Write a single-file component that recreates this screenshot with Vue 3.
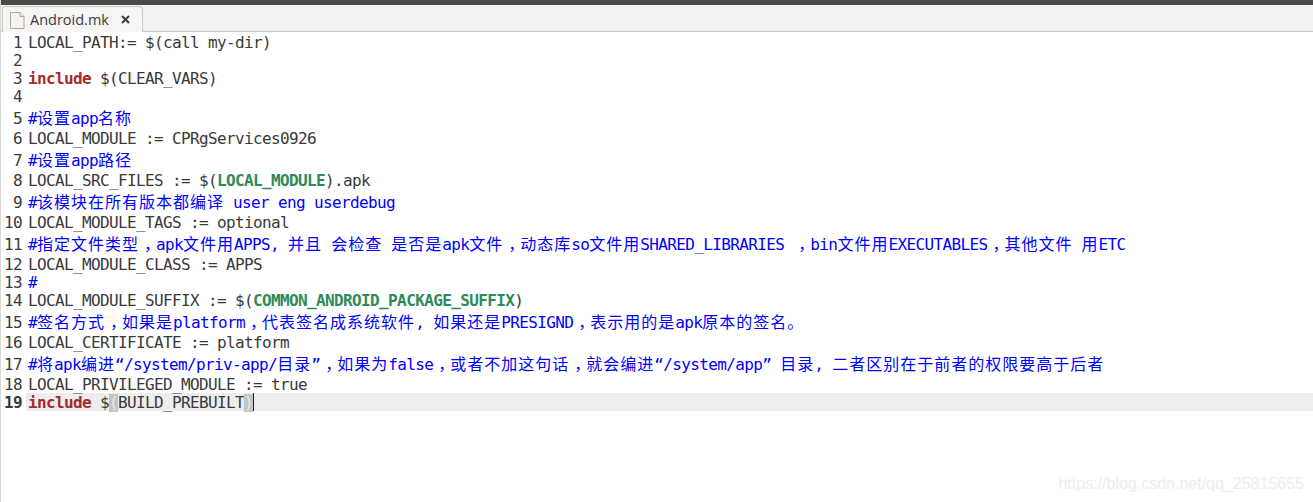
<script setup>
const K = 'k', G = 'g', C = 'c'
const lines = [
  [['LOCAL_PATH:= $(call my-dir)']],
  [],
  [['include', K], [' $(CLEAR_VARS)']],
  [],
  [['#设置app名称', C]],
  [['LOCAL_MODULE := CPRgServices0926']],
  [['#设置app路径', C]],
  [['LOCAL_SRC_FILES := $('], ['LOCAL_MODULE', G], [').apk']],
  [['#该模块在所有版本都编译 user eng userdebug', C]],
  [['LOCAL_MODULE_TAGS := optional']],
  [['#指定文件类型，apk文件用APPS, 并且 会检查 是否是apk文件，动态库so文件用SHARED_LIBRARIES ，bin文件用EXECUTABLES，其他文件 用ETC', C]],
  [['LOCAL_MODULE_CLASS := APPS']],
  [['#', C]],
  [['LOCAL_MODULE_SUFFIX := $('], ['COMMON_ANDROID_PACKAGE_SUFFIX', G], [')']],
  [['#签名方式，如果是platform，代表签名成系统软件, 如果还是PRESIGND，表示用的是apk原本的签名。', C]],
  [['LOCAL_CERTIFICATE := platform']],
  [['#将apk编进“/system/priv-app/目录”，如果为false，或者不加这句话，就会编进“/system/app” 目录, 二者区别在于前者的权限要高于后者', C]],
  [['LOCAL_PRIVILEGED_MODULE := true']],
]
const kindOf = ch => {
  if (ch === '，') return 'comma'
  if (/[\u3000-\u30ff\u4e00-\u9fff\uff00-\uffef]/.test(ch)) return 'wide'
  return ''
}
function split(text) {
  const out = []
  for (const ch of text) {
    const kind = kindOf(ch)
    const last = out[out.length - 1]
    if (last && last.kind === kind) last.text += ch
    else out.push({ text: ch, kind })
  }
  return out
}
const rows = lines.map((segs, i) => {
  const parts = segs.map(([t, cls]) => ({ cls, runs: split(t) }))
  return { n: i + 1, parts, tall: parts.some(p => p.runs.some(r => r.kind)) }
})
</script>

<template>
  <div class="window">
    <div class="topbar"></div>
    <div class="tabbar">
      <div class="tab">
        <svg class="file" width="15" height="17" viewBox="0 0 15 17">
          <path d="M.5.5h9.500l4 4v12h-13.500z" fill="#f4f4f2" stroke="#a9a9a6" />
          <path d="M10 .5v4h4" fill="#e2e2df" stroke="#a9a9a6" />
        </svg>
        <span class="name">Android.mk</span>
        <svg class="close" width="9" height="9" viewBox="0 0 9 9">
          <path d="M1 1l7 7M8 1l-7 7" stroke="#3c3c3c" stroke-width="2" />
        </svg>
      </div>
    </div>
    <div class="editor">
      <div v-for="r in rows" :key="r.n" class="row" :class="{ tall: r.tall }">
        <span class="num">{{ r.n }}</span>
        <span class="code">
          <span v-for="(p, i) in r.parts" :key="i" :class="p.cls"><span v-for="(run, j) in p.runs" :key="j" :class="run.kind">{{ run.text }}</span></span>
        </span>
      </div>
      <div class="row current">
        <span class="num">19</span>
        <span class="code curline"><span class="k">include</span> $<span class="match">(</span>BUILD_PREBUILT<span class="match">)</span><span class="cursor"></span></span>
      </div>
    </div>
    <div class="mark">https://blog.csdn.net/qq_25815655</div>
  </div>
</template>

<style scoped>
.window {
  position: relative;
  width: 1313px;
  height: 502px;
  overflow: hidden;
  background: #fff;
  border-left: 1px solid #d6d6d4;
  box-sizing: border-box;
}
.topbar { height: 5px; background: #4c4a45; margin-left: -1px; }
.tabbar {
  height: 27px;
  box-sizing: border-box;
  background: #f2f1f0;
  border-bottom: 1px solid #c9c9c7;
  padding: 1px 0 0 1px;
  display: flex;
}
.tab {
  width: 141px;
  height: 26px;
  box-sizing: border-box;
  background: #f6f5f4;
  border: 1px solid #c9c9c7;
  border-bottom: none;
  border-radius: 4px 4px 0 0;
  display: flex;
  align-items: center;
  padding-left: 7px;
}
.file { flex: none; margin-top: 2px; }
.name {
  margin-left: 5px;
  font: 14.5px/20px "Open Sans", "Noto Sans", sans-serif;
  color: #3c3c3c;
}
.close { margin-left: 12px; flex: none; }
.editor { padding-top: 1px; }
.row {
  position: relative;
  z-index: 1;
  display: flex;
  height: 18px;
  align-items: flex-start;
  font: 16px/20px "DejaVu Sans Mono", monospace;
  letter-spacing: -0.63px;
  color: #3a3a3a;
  white-space: pre;
}
.row.tall { height: 24px; line-height: 24px; align-items: baseline; }
.row.current { z-index: 0; }
.num { width: 21px; text-align: right; flex: none; color: #3a3a3a; margin-right: 4px; }
.code { flex: 1; padding-left: 2px; }
.k { color: #a52a2a; font-weight: bold; }
.g { color: #2e8b57; font-weight: bold; }
.c { color: #0000ff; }
.wide {
  font-family: "Noto Sans CJK SC", sans-serif;
  font-size: 16px;
  letter-spacing: 1px;
}
.comma {
  font-family: "Noto Sans CJK SC", sans-serif;
  font-size: 16px;
  letter-spacing: -4px;
  padding-left: 5px;
}
.current .num { font-weight: bold; }
.curline { background: #ededed; height: 18px; }
.match {
  display: inline-block;
  height: 18px;
  line-height: 18px;
  background: #c4c4c4;
  color: #ececec;
}
.cursor {
  display: inline-block;
  width: 1px;
  height: 18px;
  background: #222;
  vertical-align: top;
}
.mark {
  position: absolute;
  right: 9px;
  bottom: 8px;
  font: 16px/20px "Liberation Sans", sans-serif;
  color: #eeeeee;
}
</style>
